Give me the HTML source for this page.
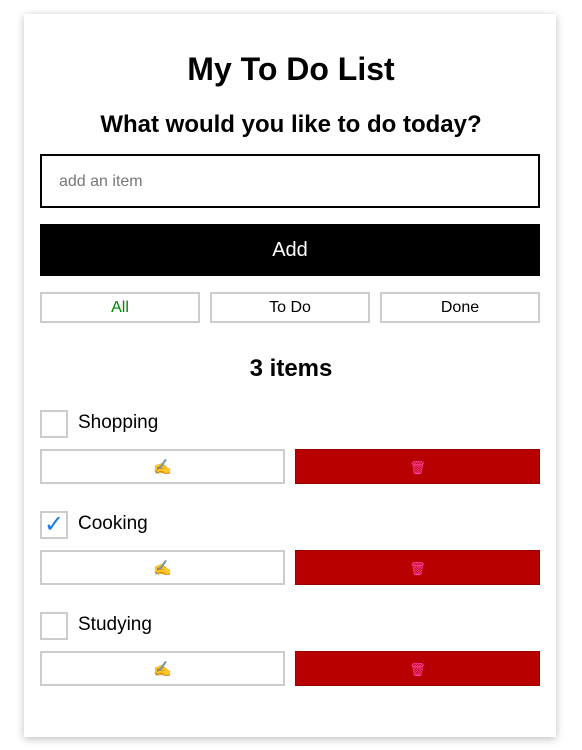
<!DOCTYPE html>
<html><head><meta charset="utf-8"><style>
*{box-sizing:border-box;margin:0;padding:0}
body{width:582px;height:750px;background:#fff;font-family:"Liberation Sans",Arial,sans-serif;position:relative;overflow:hidden}
.card{position:absolute;left:24px;top:14px;width:532px;height:723px;background:#fff;box-shadow:0 2px 8px rgba(0,0,0,.25)}
.a{position:absolute}
h1{position:absolute;left:0;width:582px;top:52px;text-align:center;font-size:32px;font-weight:bold;line-height:34px}
h2{position:absolute;left:0;width:582px;text-align:center;font-size:24px;font-weight:bold;line-height:26px}
.inp{left:40px;top:154px;width:500px;height:54px;border:2px solid #000;font-size:16px;color:#777;padding:17px 0 0 17px}
.add{left:40px;top:224px;width:500px;height:52px;background:#000;color:#fff;font-size:20px;text-align:center;line-height:52px}
.f{top:292px;width:160px;height:31px;border:2px solid #ccc;text-align:center;font-size:16px;line-height:27px}
.cb{left:40px;width:28px;height:28px;border:2px solid #ccc;color:#1e7be6;font-size:24px;line-height:24px;text-align:center}
.lb{left:78px;font-size:19px;line-height:22px}
.e{left:40px;width:245px;height:35px;border:2px solid #ccc;text-align:center;font-size:15px;line-height:33px;color:#f0b020}
.d{left:295px;width:245px;height:35px;background:#b80000;border:1px solid #900;text-align:center;font-size:13px;line-height:35px;color:#f4a}
</style></head><body>
<div class="card"></div>
<h1>My To Do List</h1>
<h2 style="top:112px">What would you like to do today?</h2>
<div class="a inp">add an item</div>
<div class="a add">Add</div>
<div class="a f" style="left:40px;color:#080">All</div>
<div class="a f" style="left:210px">To Do</div>
<div class="a f" style="left:380px">Done</div>
<h2 style="top:356px">3 items</h2>

<div class="a cb" style="top:410px"></div>
<div class="a lb" style="top:412px">Shopping</div>
<div class="a e" style="top:449px">✍</div>
<div class="a d" style="top:449px">🗑</div>

<div class="a cb" style="top:511px">✓</div>
<div class="a lb" style="top:513px">Cooking</div>
<div class="a e" style="top:550px">✍</div>
<div class="a d" style="top:550px">🗑</div>

<div class="a cb" style="top:612px"></div>
<div class="a lb" style="top:614px">Studying</div>
<div class="a e" style="top:651px">✍</div>
<div class="a d" style="top:651px">🗑</div>
</body></html>
